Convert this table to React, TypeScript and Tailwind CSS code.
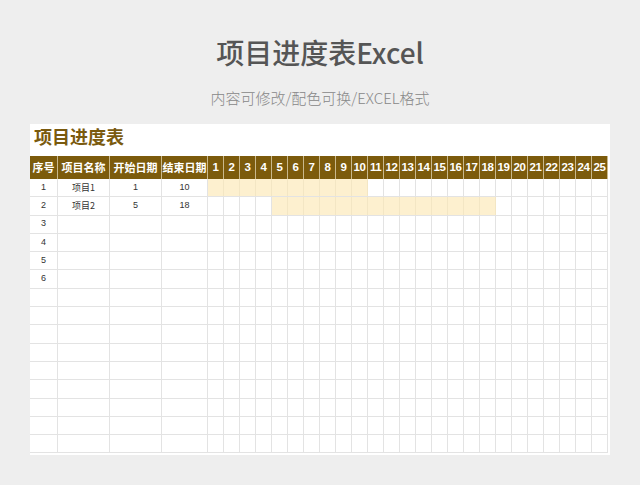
import React from 'react';

const days = Array.from({ length: 25 }, (_, i) => i + 1);

const rows = [
  { no: '1', name: '项目1', start: 1, end: 10 },
  { no: '2', name: '项目2', start: 5, end: 18 },
  { no: '3' },
  { no: '4' },
  { no: '5' },
  { no: '6' },
  {}, {}, {}, {}, {}, {}, {}, {}, {},
] as { no?: string; name?: string; start?: number; end?: number }[];

const App: React.FC = () => {
  return (
    <div
      className="w-[640px] h-[485px] bg-[#eeeeee] flex flex-col items-center"
      style={{ fontFamily: '"Noto Sans CJK SC", "Noto Sans", sans-serif' }}
    >
      <h1 className="mt-[33px] text-[28px] leading-[38px] font-medium text-[#555555]">项目进度表Excel</h1>
      <p className="mt-[17px] text-[15px] leading-[20px] font-light text-[#888888]">内容可修改/配色可换/EXCEL格式</p>

      <div className="mt-[16px] w-[580px] h-[331px] bg-white flex flex-col">
        <div className="h-[32px] pl-[4px] pt-[1px] text-[18px] leading-[22px] font-bold text-[#7a5a0e]">项目进度表</div>

        {/* header */}
        <div className="flex h-[23px] w-[578px] bg-[#7c5b0c] text-white text-[11px] font-bold">
          <div className="w-[28px] shrink-0 flex items-center justify-center border-r border-[#c9b88c]">序号</div>
          <div className="w-[52px] shrink-0 flex items-center justify-center border-r border-[#c9b88c]">项目名称</div>
          <div className="w-[52px] shrink-0 flex items-center justify-center border-r border-[#c9b88c]">开始日期</div>
          <div className="w-[46px] shrink-0 flex items-center justify-center border-r border-[#c9b88c]">结束日期</div>
          {days.map((d) => (
            <div
              key={d}
              className="w-[16px] shrink-0 flex items-center justify-center border-r border-[#c9b88c] text-[11.5px] tracking-[-0.5px]"
              style={{ fontFamily: '"Liberation Sans", sans-serif' }}
            >
              {d}
            </div>
          ))}
        </div>

        {/* body */}
        {rows.map((r, i) => (
          <div key={i} className="flex w-[578px] h-[18.3px] text-[9px] text-[#333333] border-b border-[#e3e3e3]">
            <div className="w-[28px] shrink-0 flex items-center justify-center border-r border-[#e3e3e3]" style={{ fontFamily: '"Liberation Sans", sans-serif' }}>{r.no}</div>
            <div className="w-[52px] shrink-0 flex items-center justify-center border-r border-[#e3e3e3]">{r.name}</div>
            <div className="w-[52px] shrink-0 flex items-center justify-center border-r border-[#e3e3e3]" style={{ fontFamily: '"Liberation Sans", sans-serif' }}>{r.start}</div>
            <div className="w-[46px] shrink-0 flex items-center justify-center border-r border-[#e3e3e3]" style={{ fontFamily: '"Liberation Sans", sans-serif' }}>{r.end}</div>
            {days.map((d) => {
              const on = r.start !== undefined && r.end !== undefined && d >= r.start && d <= r.end;
              return (
                <div
                  key={d}
                  className={
                    on
                      ? 'w-[16px] shrink-0 bg-[#fdf0cf] border-r border-[#f3e6c4]'
                      : 'w-[16px] shrink-0 border-r border-[#e3e3e3]'
                  }
                />
              );
            })}
          </div>
        ))}
      </div>
    </div>
  );
};

export default App;
